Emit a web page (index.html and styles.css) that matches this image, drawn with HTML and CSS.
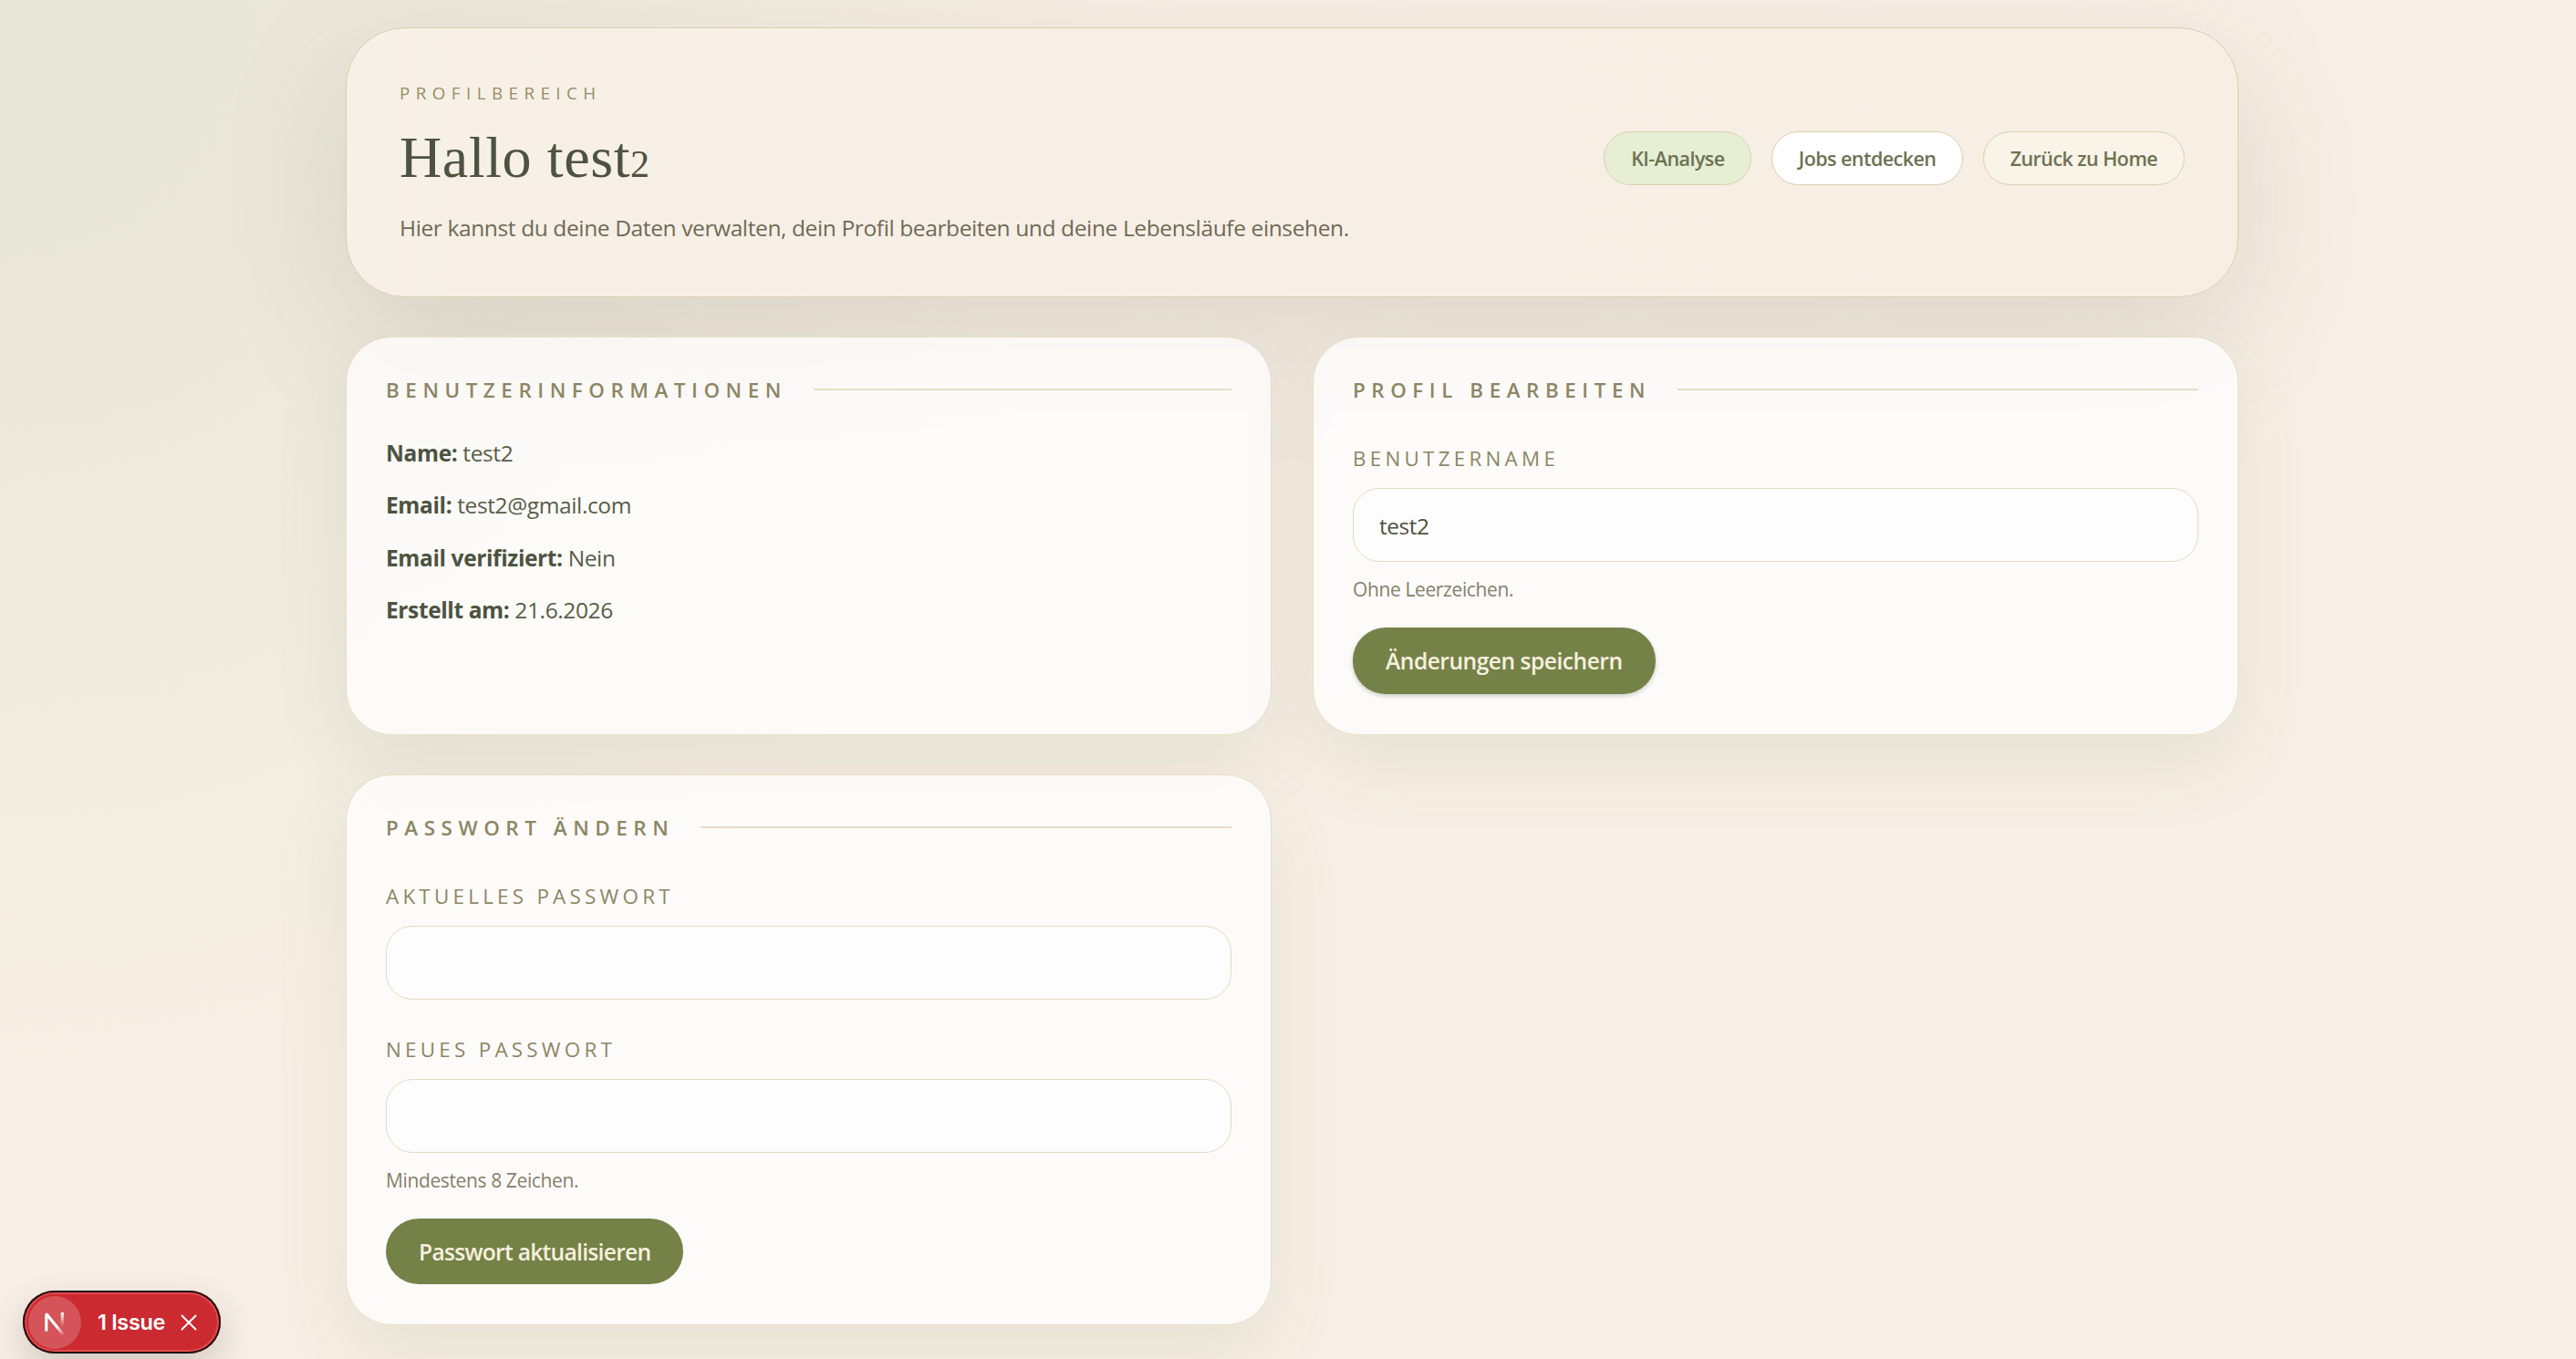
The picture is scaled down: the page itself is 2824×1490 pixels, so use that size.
FILE: index.html
```html
<!DOCTYPE html>
<html lang="de">

<head>
  <meta charset="utf-8">
  <title>Profil</title>
  <link rel="stylesheet" href="styles.css">
</head>

<body>

  <main class="page">
    <header class="hero">
      <div>
        <p class="eyebrow">Profilbereich</p>
        <h1>Hallo test<span class="old-num">2</span></h1>
        <p class="lead">Hier kannst du deine Daten verwalten, dein Profil bearbeiten und deine Lebensläufe einsehen.</p>
      </div>
      <nav class="actions">
        <a class="pill pill-green">KI-Analyse</a>
        <a class="pill pill-white">Jobs entdecken</a>
        <a class="pill">Zurück zu Home</a>
      </nav>
    </header>

    <div class="grid">
      <section class="card">
        <h2>Benutzerinformationen</h2>
        <div class="info">
          <p><strong>Name:</strong> <span>test2</span></p>
          <p><strong>Email:</strong> <span>test2@gmail.com</span></p>
          <p><strong>Email verifiziert:</strong> <span>Nein</span></p>
          <p><strong>Erstellt am:</strong> <span>21.6.2026</span></p>
        </div>
      </section>

      <section class="card">
        <h2>Profil bearbeiten</h2>
        <form>
          <label for="username">Benutzername</label>
          <input type="text" id="username" value="test2">
          <p class="hint">Ohne Leerzeichen.</p>
          <button type="button" class="save">Änderungen speichern</button>
        </form>
      </section>

      <section class="card">
        <h2>Passwort ändern</h2>
        <form>
          <label for="current">Aktuelles Passwort</label>
          <input type="password" id="current">
          <label for="new">Neues Passwort</label>
          <input type="password" id="new">
          <p class="hint">Mindestens 8 Zeichen.</p>
          <button type="button">Passwort aktualisieren</button>
        </form>
      </section>
    </div>
  </main>

  <div class="issue">
    <span class="issue-logo">
      <svg width="58" height="58" viewBox="0 0 58 58" fill="none">
        <defs>
          <linearGradient id="diag" x1="34" y1="32" x2="40" y2="43" gradientUnits="userSpaceOnUse">
            <stop stop-color="#fff" />
            <stop offset="1" stop-color="#fff" stop-opacity="0" />
          </linearGradient>
          <linearGradient id="stem" x1="37" y1="18" x2="37" y2="33" gradientUnits="userSpaceOnUse">
            <stop stop-color="#fff" />
            <stop offset="1" stop-color="#fff" stop-opacity="0" />
          </linearGradient>
        </defs>
        <path d="M19.8 38.5V19.5L38.5 42.5" stroke="url(#diag)" stroke-width="3.2" stroke-linejoin="bevel" />
        <path d="M37.3 18v16" stroke="url(#stem)" stroke-width="3.2" />
      </svg>
    </span>
    <span class="issue-text">1 Issue</span>
    <svg class="issue-close" width="18" height="18" viewBox="0 0 18 18">
      <path d="M1.5 1.5l15 15M16.5 1.5l-15 15" stroke="#fff" stroke-width="2" stroke-linecap="round" />
    </svg>
  </div>

</body>

</html>
```
FILE: styles.css
```css
* {
  box-sizing: border-box;
}

:root {
  --bg: #f7efe5;
  --dark: #4d5340;
  --olive: #8c8664;
  --green: #748248;
  --line: #e8dec4;
}

body {
  margin: 0;
  height: 1490px;
  overflow: hidden;
  font-family: "Open Sans", "Noto Sans", sans-serif;
  color: var(--dark);
  background: radial-gradient(circle at top left, #e6e5d6, rgba(230, 229, 214, 0) 38%) var(--bg);
}

h1, h2, p {
  margin: 0;
}

.page {
  width: 2075px;
  margin-left: 379px;
  padding-top: 30px;
}

/* header */
.hero {
  display: flex;
  align-items: center;
  justify-content: space-between;
  height: 296px;
  padding: 57px 58px;
  border: 1px solid #d9cfb0;
  border-radius: 65px;
  background: linear-gradient(90deg, #f7f0e6, #f7eee4);
  box-shadow: 0 45px 144px rgba(77, 70, 50, 0.15);
}

.eyebrow {
  font-size: 18.7px;
  line-height: 27px;
  letter-spacing: 6.5px;
  text-transform: uppercase;
  color: #948d68;
}

h1 {
  margin-top: 22px;
  font-family: "Liberation Serif", serif;
  font-size: 64px;
  font-weight: 400;
  line-height: 72px;
  letter-spacing: 0.6px;
}

/* old style figure, sits at x-height */
.old-num {
  font-size: 42px;
  line-height: 1;
}

.lead {
  margin-top: 22px;
  font-size: 24.5px;
  line-height: 38px;
  letter-spacing: -0.38px;
  color: #6f6a57;
}

.actions {
  display: flex;
  gap: 21.6px;
  margin-bottom: 9px;
}

.pill {
  height: 59px;
  padding: 0 28.8px;
  border: 1px solid #d9cfae;
  border-radius: 30px;
  background: #faf3e7;
  font-size: 21.5px;
  font-weight: 600;
  line-height: 57px;
  letter-spacing: -0.55px;
  color: #6c7252;
}

.pill-green {
  background: #e6efd3;
}

.pill-white {
  background: #fff;
}

/* cards */
.grid {
  display: grid;
  grid-template-columns: 1fr 1fr;
  gap: 43px 45px;
  margin-top: 43px;
}

.card {
  padding: 43px 43px 44px;
  border: 1px solid #e8dfc6;
  border-radius: 50px;
  background: rgba(255, 255, 255, 0.76);
  background-clip: padding-box;
  box-shadow: 0 32px 81px rgba(85, 105, 60, 0.1);
}

h2 {
  display: flex;
  align-items: center;
  gap: 28.8px;
  font-size: 22.4px;
  font-weight: 600;
  line-height: 29px;
  letter-spacing: 6.56px;
  text-transform: uppercase;
  color: var(--olive);
}

h2::after {
  content: "";
  flex: 1;
  height: 2px;
  margin-bottom: 1px;
  background: var(--line);
}

.info {
  display: grid;
  gap: 17.3px;
  margin-top: 35px;
  font-size: 24.5px;
  line-height: 40px;
  letter-spacing: -0.38px;
}

.info span {
  color: #595c48;
}

/* forms */
label {
  display: block;
  margin-top: 45px;
  font-size: 22.4px;
  line-height: 32px;
  letter-spacing: 4.25px;
  text-transform: uppercase;
  color: var(--olive);
}

input + label {
  margin-top: 39px;
}

input {
  display: block;
  width: 100%;
  height: 81px;
  margin-top: 16px;
  padding: 2px 28px 0;
  border: 1px solid #e6dac0;
  border-radius: 29px;
  background: #fdfdfd;
  font: inherit;
  font-size: 24.5px;
  letter-spacing: -0.5px;
  color: var(--dark);
}

.hint {
  margin-top: 14px;
  font-size: 21px;
  line-height: 32px;
  letter-spacing: -0.38px;
  color: #85806a;
}

button {
  display: block;
  height: 72px;
  margin-top: 26px;
  padding: 0 36px;
  border: none;
  border-radius: 36px;
  background: var(--green);
  font: inherit;
  font-size: 24.6px;
  font-weight: 600;
  letter-spacing: -0.72px;
  color: #f8f0de;
}

.save {
  height: 73px;
  letter-spacing: -0.5px;
  box-shadow: 0 2px 5px rgba(0, 0, 0, 0.2);
}

/* dev overlay */
.issue {
  position: absolute;
  left: 25px;
  top: 1415px;
  display: flex;
  align-items: center;
  width: 217px;
  height: 69px;
  padding-left: 6px;
  border-radius: 35px;
  background: #ca2a30;
  box-shadow: inset 0 0 0 2px #1c1414, inset 0 0 0 4px #e5484d, 0 16px 40px rgba(0, 0, 0, 0.16);
  color: #fff;
}

.issue-logo {
  width: 58px;
  height: 58px;
  border-radius: 50%;
  background: rgba(255, 255, 255, 0.2);
}

.issue-text {
  margin-left: 18px;
  font-family: Inter, sans-serif;
  font-size: 23.4px;
  font-weight: 600;
  letter-spacing: -0.3px;
}

.issue-close {
  margin-left: 17px;
}
```
